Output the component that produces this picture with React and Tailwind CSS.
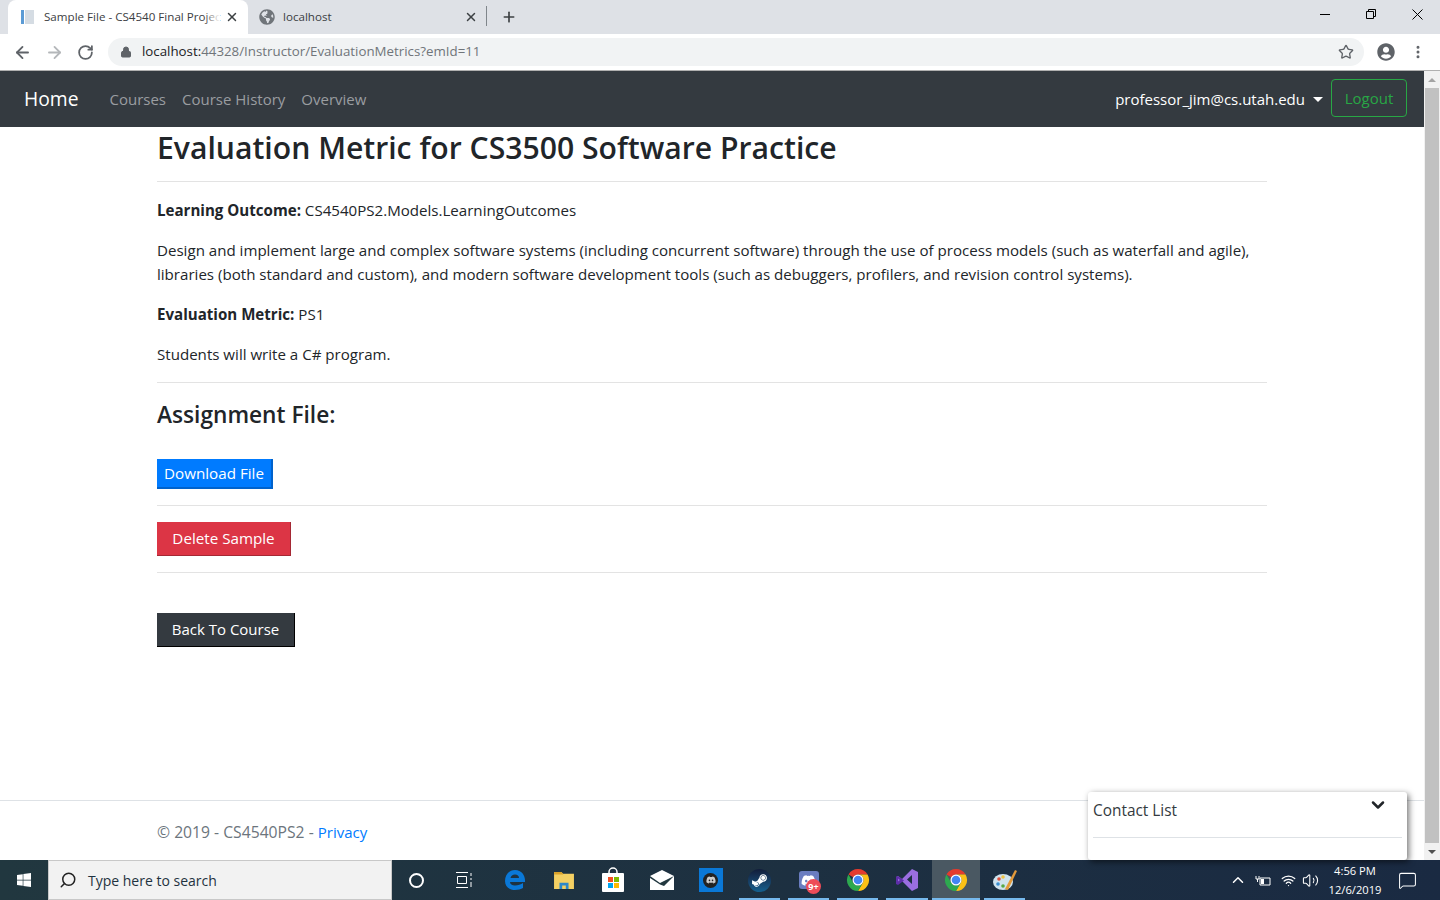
import React from 'react';
import { ArrowLeft, ArrowRight, RotateCw, Lock, Star, EllipsisVertical, X, Plus, Search, ChevronDown, ChevronUp, Volume2, MessageSquare, Wifi } from 'lucide-react';
import { FaUserCircle, FaWindows, FaGlobeAmericas, FaSteamSymbol, FaDiscord } from 'react-icons/fa';

const font = 'font-["Open_Sans","Noto_Sans",sans-serif]';

const ChromeIcon = ({ size = 24 }) => (
  <svg width={size} height={size} viewBox="0 0 24 24">
    <path d="M12 1A11 11 0 0 1 21.53 6.5H12A5.5 5.5 0 0 0 7.24 9.25L2.47 6.5A11 11 0 0 1 12 1z" fill="#e33b2e" />
    <path d="M21.53 6.5A11 11 0 0 1 12 23L16.76 14.75A5.5 5.5 0 0 0 12 6.5z" fill="#fbc116" />
    <path d="M2.47 6.5L7.24 14.75A5.5 5.500 0 0 0 16.76 14.75L12 23A11 11 0 0 1 2.47 6.5z" fill="#2da94f" />
    <circle cx="12" cy="12" r="5.5" fill="#fff" />
    <circle cx="12" cy="12" r="4.3" fill="#4285f4" />
  </svg>
);

// running-app marker under a taskbar icon
const Bar = () => <div className="absolute bottom-0 left-[4px] right-[4px] h-[2px] bg-[#76b9ed]" />;

const Tab = ({ active, icon, title }) => (
  <div className={`relative flex h-[34px] items-center ${active ? 'w-[240px] rounded-t-lg bg-white pl-3 pr-[9px]' : 'w-[238px] pl-[11px] pr-[8px]'}`}>
    {icon}
    <span className="ml-2 whitespace-nowrap text-[11.6px] text-[#3c4043]">{title}</span>
    {active && <div className="absolute left-[196px] top-0 h-full w-[16px] bg-linear-to-r from-transparent to-white" />}
    <X size={14} strokeWidth={2.5} className="relative ml-auto text-[#3c4043]" />
  </div>
);

const Taskbar = () => (
  <div className={`flex h-10 items-stretch bg-linear-to-r from-[#21373f] to-[#1a2a42] text-white ${font}`}>
    <div className="flex w-12 items-center justify-center">
      <FaWindows size={16} />
    </div>
    <div className="flex w-[344px] items-center border border-[#c8c8c8] bg-[#f2f2f2] pl-[10px] text-[14px] text-[#1f3240]">
      <Search size={18} className="-scale-x-100 text-[#222]" />
      <span className="ml-[11px]">Type here to search</span>
    </div>
    <div className="flex w-[48px] items-center justify-center">
      <div className="h-[15px] w-[15px] rounded-full border-2 border-white" />
    </div>
    <div className="flex w-[47px] items-center justify-center">
      <svg width="18" height="16" viewBox="0 0 18 16" fill="none" stroke="white">
        <path d="M1 .5h12M1 15.500h12M2.500 4.500h9v7h-9zM16 1v3M16 6v2M16 10v5" />
      </svg>
    </div>
    <div className="flex w-[52px] items-center justify-center pl-1">
      <svg width="22" height="24" viewBox="0 0 22 24">
        <path d="M11 2C5 2 1 7 1 13c0 6 5 9 10 9 3 0 6-1 8-2v-5c-2 1.500-5 2.500-8 2.500-3 0-5-1.500-5-3.500h15c.5-6-3-12-10-12zM6.500 10c.5-2 2-3.500 4.500-3.500S15 8 15 10z" fill="#0a78d7" />
      </svg>
    </div>
    <div className="flex w-[49px] items-center justify-center">
      <svg width="22" height="19" viewBox="0 0 24 21">
        <path d="M1 1h8l2 2h12v17H1z" fill="#f4d063" />
        <path d="M1 1h8l2 2v1H1z" fill="#d9a12a" />
        <path d="M7 20v-7h10v7h-3v-4h-4v4z" fill="#2f88c9" />
      </svg>
    </div>
    <div className="flex w-[49px] items-center justify-center">
      <svg width="24" height="26" viewBox="0 0 24 26">
        <path d="M8 7V5a4 4 0 0 1 8 0v2" fill="none" stroke="white" strokeWidth="1.500" />
        <rect x="1" y="6" width="22" height="19" rx="1" fill="white" />
        <rect x="7" y="10" width="5" height="5" fill="#f25022" />
        <rect x="13" y="10" width="5" height="5" fill="#7fba00" />
        <rect x="7" y="16" width="5" height="5" fill="#00a4ef" />
        <rect x="13" y="16" width="5" height="5" fill="#ffb900" />
      </svg>
    </div>
    <div className="flex w-[49px] items-center justify-center">
      <svg width="24" height="20" viewBox="0 0 24 20">
        <path d="M0 6 12 0l12 6v14H0z" fill="white" />
        <path d="M0 6 10 13 24 6 14 16 10 14.500 0 8z" fill="#21373f" />
      </svg>
    </div>
    <div className="flex w-[49px] items-center justify-center">
      <div className="flex h-6 w-6 items-center justify-center bg-[#0a78d7]">
        <div className="flex h-[15px] w-[15px] items-center justify-center rounded-full bg-[#222] text-[#ccc]">
          <FaDiscord size={10} />
        </div>
      </div>
    </div>
    <div className="relative flex w-[49px] items-center justify-center">
      <div className="flex h-[23px] w-[23px] items-center justify-center rounded-full bg-linear-to-b from-[#111d3a] to-[#14608f]">
        <FaSteamSymbol size={17} className="text-white" />
      </div>
      <Bar />
    </div>
    <div className="relative flex w-[49px] items-center justify-center">
      <div className="flex h-[18px] w-5 items-center justify-center rounded-[3px] bg-[#6a7dc0]">
        <FaDiscord size={15} />
      </div>
      <div className="absolute left-[22px] top-[19px] flex h-[15px] w-[15px] items-center justify-center rounded-full bg-[#ee4c58] text-[9px] font-bold leading-none">9+</div>
      <Bar />
    </div>
    <div className="relative flex w-[49px] items-center justify-center">
      <ChromeIcon />
      <Bar />
    </div>
    <div className="relative flex w-[50px] items-center justify-center">
      <svg width="24" height="24" viewBox="0 0 24 24">
        <path d="M17 1l6 3v16l-6 3-10-10-4 3-2-1V9l2-1 4 3zM17 7l-5 4.500 5 4.500z" fill="#9a6ee0" fillRule="evenodd" />
        <path d="M1 9l2-1 4 3 2 1.500-2 1.500-4 3-2-1zM3 10.500v3L5 12z" fill="#5d2ea8" fillRule="evenodd" />
      </svg>
      <Bar />
    </div>
    <div className="relative flex w-[48px] items-center justify-center bg-[#4a5862]">
      <ChromeIcon />
      <div className="absolute inset-x-0 bottom-0 h-[2px] bg-[#76b9ed]" />
    </div>
    <div className="relative flex w-[49px] items-center justify-center">
      <svg width="26" height="26" viewBox="0 0 26 26">
        <ellipse cx="11" cy="15" rx="10" ry="8" fill="#cfe3ee" />
        <circle cx="7" cy="12" r="1.800" fill="#e0503c" />
        <circle cx="11" cy="10" r="1.800" fill="#f0c243" />
        <circle cx="6" cy="17" r="1.800" fill="#3a8fd0" />
        <circle cx="11" cy="19" r="1.800" fill="#58a845" />
        <path d="M13 22 23 3l2 1-9 19z" fill="#e39a3b" />
      </svg>
      <Bar />
    </div>
    <div className="ml-auto flex items-center pr-3">
      <ChevronUp size={18} className="mr-2" />
      <svg width="16" height="12" viewBox="0 0 16 12" fill="none" stroke="white" className="mr-[10px]">
        <path d="M1 2v3h3V2M2.500 5v3M5 4h10v7H5z" />
        <rect x="6" y="5" width="3" height="5" fill="white" stroke="none" />
      </svg>
      <Wifi size={15} className="mr-[6px]" />
      <Volume2 size={17} strokeWidth={1.500} className="mr-[5px]" />
      <div className="w-[62px] text-center text-[11.2px] leading-[19px]">
        <div>4:56 PM</div>
        <div>12/6/2019</div>
      </div>
      <div className="flex w-[42px] items-center justify-center">
        <MessageSquare size={19} strokeWidth={1.300} />
      </div>
    </div>
  </div>
);

export default function App() {
  return (
    <div className={`flex h-[900px] flex-col overflow-hidden bg-white text-[#212529] ${font}`}>
      {/* browser chrome */}
      <div className="flex h-[34px] items-end bg-[#dee1e6] pl-2">
        <Tab
          active
          title="Sample File - CS4540 Final Projec"
          icon={
            <svg width="16" height="16" viewBox="0 0 16 16">
              <rect x="1" y="1" width="3" height="14" fill="#5b9bd5" />
              <rect x="5" y="1" width="9" height="14" fill="#d5dce3" />
            </svg>
          }
        />
        <Tab active={false} title="localhost" icon={<FaGlobeAmericas size={16} className="text-[#70757a]" />} />
        <div className="mb-2 h-5 w-px bg-[#80868b]" />
        <Plus size={16} strokeWidth={2.500} className="mb-[9px] ml-[14px] text-[#3c4043]" />
        <div className="ml-auto flex h-[34px] items-start text-[#111]">
          <div className="flex h-7 w-[46px] items-center justify-center"><div className="h-px w-[10px] bg-black" /></div>
          <div className="flex h-7 w-[46px] items-center justify-center">
            <svg width="10" height="10" viewBox="0 0 10 10" fill="none" stroke="black"><path d="M.5 2.500h7v7h-7zM2.500 2.500v-2h7v7h-2" /></svg>
          </div>
          <div className="flex h-7 w-[46px] items-center justify-center">
            <svg width="11" height="11" viewBox="0 0 11 11" fill="none" stroke="black"><path d="M.5.5l10 10M10.500.5l-10 10" /></svg>
          </div>
        </div>
      </div>
      <div className="flex h-[37px] items-center border-b border-[#b0b0b0] bg-white pl-[13px]">
        <ArrowLeft size={19} strokeWidth={2.300} className="text-[#5f6368]" />
        <ArrowRight size={19} strokeWidth={2.300} className="ml-[13px] text-[#b4b7ba]" />
        <RotateCw size={17} strokeWidth={2.500} className="ml-[13px] text-[#5f6368]" />
        <div className="ml-[14px] flex h-7 w-[1256px] items-center rounded-full bg-[#f1f3f4] pl-3 pr-[10px] text-[13.3px]">
          <Lock size={12} fill="#5f6368" className="text-[#5f6368]" />
          <span className="ml-[10px] text-[#202124]">localhost:</span>
          <span className="text-[#70757a]">44328/Instructor/EvaluationMetrics?emId=11</span>
          <Star size={16} strokeWidth={2} className="ml-auto text-[#5f6368]" />
        </div>
        <FaUserCircle size={18} className="ml-[13px] text-[#5f6368]" />
        <EllipsisVertical size={16} strokeWidth={2.500} className="ml-[15px] text-[#5f6368]" />
      </div>

      <div className="flex min-h-0 flex-1">
        <div className="flex min-w-0 flex-1 flex-col">
          {/* navbar */}
          <nav className="flex h-14 shrink-0 items-center bg-[#343a40] pl-6 pr-[17px]">
            <a className="text-[19.3px] text-white">Home</a>
            <a className="ml-[31px] text-[15px] text-[#9a9da0]">Courses</a>
            <a className="ml-4 text-[15px] text-[#9a9da0]">Course History</a>
            <a className="ml-4 text-[15px] text-[#9a9da0]">Overview</a>
            <a className="ml-auto text-[15px] text-white">professor_jim@cs.utah.edu</a>
            <span className="ml-2 h-0 w-0 border-x-[5px] border-t-[5px] border-x-transparent border-t-white" />
            <button className="mb-[2px] ml-[8px] h-[38px] w-[76px] rounded border border-[#28a745] text-[15px] text-[#28a745]">Logout</button>
          </nav>

          <main className="relative flex-1">
            <div className="mx-auto w-[1110px]">
              <h1 className="text-[30.15px] font-semibold leading-[42px]">Evaluation Metric for CS3500 Software Practice</h1>
              <hr className="mt-[12px] border-[#e3e3e3]" />
              <p className="mt-4 text-[15.1px] leading-6"><b className="font-bold">Learning Outcome:</b> CS4540PS2.Models.LearningOutcomes</p>
              <p className="mt-4 text-[15.1px] leading-6">Design and implement large and complex software systems (including concurrent software) through the use of process models (such as waterfall and agile), libraries (both standard and custom), and modern software development tools (such as debuggers, profilers, and revision control systems).</p>
              <p className="mt-4 text-[15.1px] leading-6"><b className="font-bold">Evaluation Metric:</b> PS1</p>
              <p className="mt-4 text-[15.1px] leading-6">Students will write a C# program.</p>
              <hr className="mt-4 border-[#e3e3e3]" />
              <h3 className="mt-[16px] text-[22.7px] font-semibold leading-[32px]">Assignment File:</h3>
              <button className="mt-[28px] block h-[30px] w-[116px] border-r-2 border-b-2 border-[#0062cc] bg-[#007bff] text-[15.2px] text-white">Download File</button>
              <hr className="mt-4 border-[#e3e3e3]" />
              <button className="mt-4 block h-[34px] w-[134px] border-r border-b border-[#a52834] bg-[#dc3545] text-[15.2px] text-white">Delete Sample</button>
              <hr className="mt-4 border-[#e3e3e3]" />
              <button className="mt-10 block h-[34px] w-[138px] border-r border-b border-black bg-[#343a40] text-[15px] text-white">Back To Course</button>
            </div>

            <footer className="absolute inset-x-0 bottom-0 h-[60px] border-t border-[#dee2e6] pl-[157px] pt-[19px] text-[15.7px] leading-6 text-[#6c757d]">
              © 2019 - CS4540PS2 - <a className="text-[15px] text-[#007bff]">Privacy</a>
            </footer>

            {/* contact list popup */}
            <div className="absolute bottom-0 left-[1088px] h-[68px] w-[319px] rounded-[3px] bg-white px-[5px] shadow-[2px_2px_6px_rgba(0,0,0,0.55)]">
              <div className="flex h-[46px] border-b border-[#dee2e6]">
                <span className="pt-[7px] text-[15.4px] font-medium leading-6 text-[#343a40]">Contact List</span>
                <ChevronDown size={20} strokeWidth={3} className="ml-auto mr-[14px] mt-[3px] text-[#212529]" />
              </div>
            </div>
          </main>
        </div>

        {/* scrollbar */}
        <div className="flex w-4 shrink-0 flex-col bg-[#f1f1f1]">
          <div className="flex h-[17px] items-center justify-center">
            <div className="h-0 w-0 border-x-[4px] border-b-[4px] border-x-transparent border-b-[#a3a3a3]" />
          </div>
          <div className="mx-px flex-1 bg-[#c1c1c1]" />
          <div className="flex h-[17px] items-center justify-center">
            <div className="h-0 w-0 border-x-[4px] border-t-[4px] border-x-transparent border-t-[#505050]" />
          </div>
        </div>
      </div>

      <Taskbar />
    </div>
  );
}
